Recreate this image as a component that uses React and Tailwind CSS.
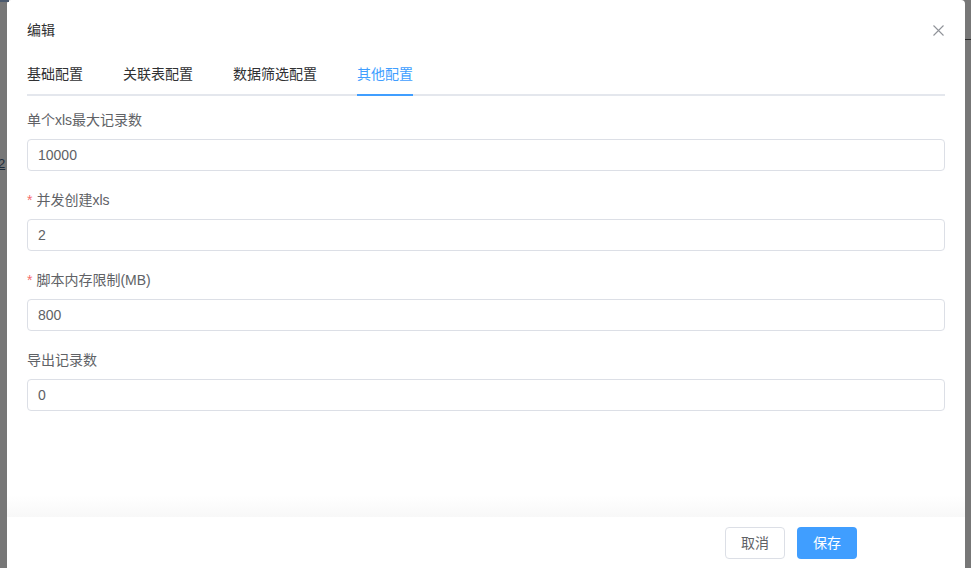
import React from "react";

const fontStack = {
  fontFamily: '"Liberation Sans", "Noto Sans CJK SC", sans-serif',
};

const tabs = ["基础配置", "关联表配置", "数据筛选配置", "其他配置"];

const fields = [
  { label: "单个xls最大记录数", value: "10000", required: false },
  { label: "并发创建xls", value: "2", required: true },
  { label: "脚本内存限制(MB)", value: "800", required: true },
  { label: "导出记录数", value: "0", required: false },
];

const Field = ({ label, value, required, last }) => (
  <div className={last ? "" : "mb-[19px]"}>
    <div className="h-[20px] leading-[20px] text-[14px] text-[#606266] mb-[9px]">
      {required && <span className="text-[#f56c6c] mr-[4px]">*</span>}
      {label}
    </div>
    <div className="h-[32px] border border-[#dcdfe6] rounded-[4px] px-[10px] flex items-center text-[14px] text-[#606266]">
      {value}
    </div>
  </div>
);

const App = () => {
  return (
    <div
      className="w-[971px] h-[568px] bg-[#777777] flex overflow-hidden"
      style={fontStack}
    >
      {/* left backdrop strip */}
      <div className="w-[7px] relative">
        <div className="absolute top-0 left-0 w-[9px] h-[2px] bg-[#4b5a6e]" />
        <div className="absolute top-[156px] -left-[2px] text-[13px] leading-[16px] text-[#1f2d3d] underline">
          2
        </div>
      </div>

      {/* dialog */}
      <div className="w-[958px] bg-white rounded-t-[4px] flex flex-col">
        <div className="pt-[20px] px-[20px]">
          <div className="flex items-center justify-between h-[20px]">
            <span className="text-[14px] leading-[20px] text-[#303133]">编辑</span>
            <svg
              width="11"
              height="11"
              viewBox="0 0 11 11"
              className="mr-[1px]"
            >
              <path
                d="M0.5 0.5 L10.5 10.5 M10.5 0.5 L0.5 10.5"
                stroke="#909399"
                strokeWidth="1.1"
                fill="none"
              />
            </svg>
          </div>

          <div className="mt-[14px] flex border-b-2 border-[#e4e7ed]">
            {tabs.map((t, i) => (
              <div
                key={t}
                className={
                  "relative h-[40px] leading-[40px] text-[14px] " +
                  (i < tabs.length - 1 ? "mr-[40px] " : "") +
                  (i === 3 ? "text-[#409eff]" : "text-[#303133]")
                }
              >
                {t}
                {i === 3 && (
                  <div className="absolute left-0 right-0 -bottom-[2px] h-[2px] bg-[#409eff]" />
                )}
              </div>
            ))}
          </div>

          <div className="mt-[14px]">
            {fields.map((f, i) => (
              <Field key={f.label} {...f} last={i === fields.length - 1} />
            ))}
          </div>
        </div>

        <div className="flex-1" />
        <div className="h-[22px] bg-gradient-to-b from-white to-[#f8f8f8]" />

        <div className="h-[51px] pt-[10px] pr-[108px] flex justify-end gap-[12px]">
          <button className="w-[60px] h-[32px] border border-[#dcdfe6] rounded-[4px] bg-white text-[14px] text-[#606266]">
            取消
          </button>
          <button className="w-[60px] h-[32px] rounded-[4px] bg-[#409eff] text-[14px] text-white">
            保存
          </button>
        </div>
      </div>

      {/* right backdrop strip */}
      <div className="w-[6px] relative">
        <div className="absolute top-[39px] left-0 w-[6px] h-[1px] bg-[#2a2a2a]" />
      </div>
    </div>
  );
};

export default App;
